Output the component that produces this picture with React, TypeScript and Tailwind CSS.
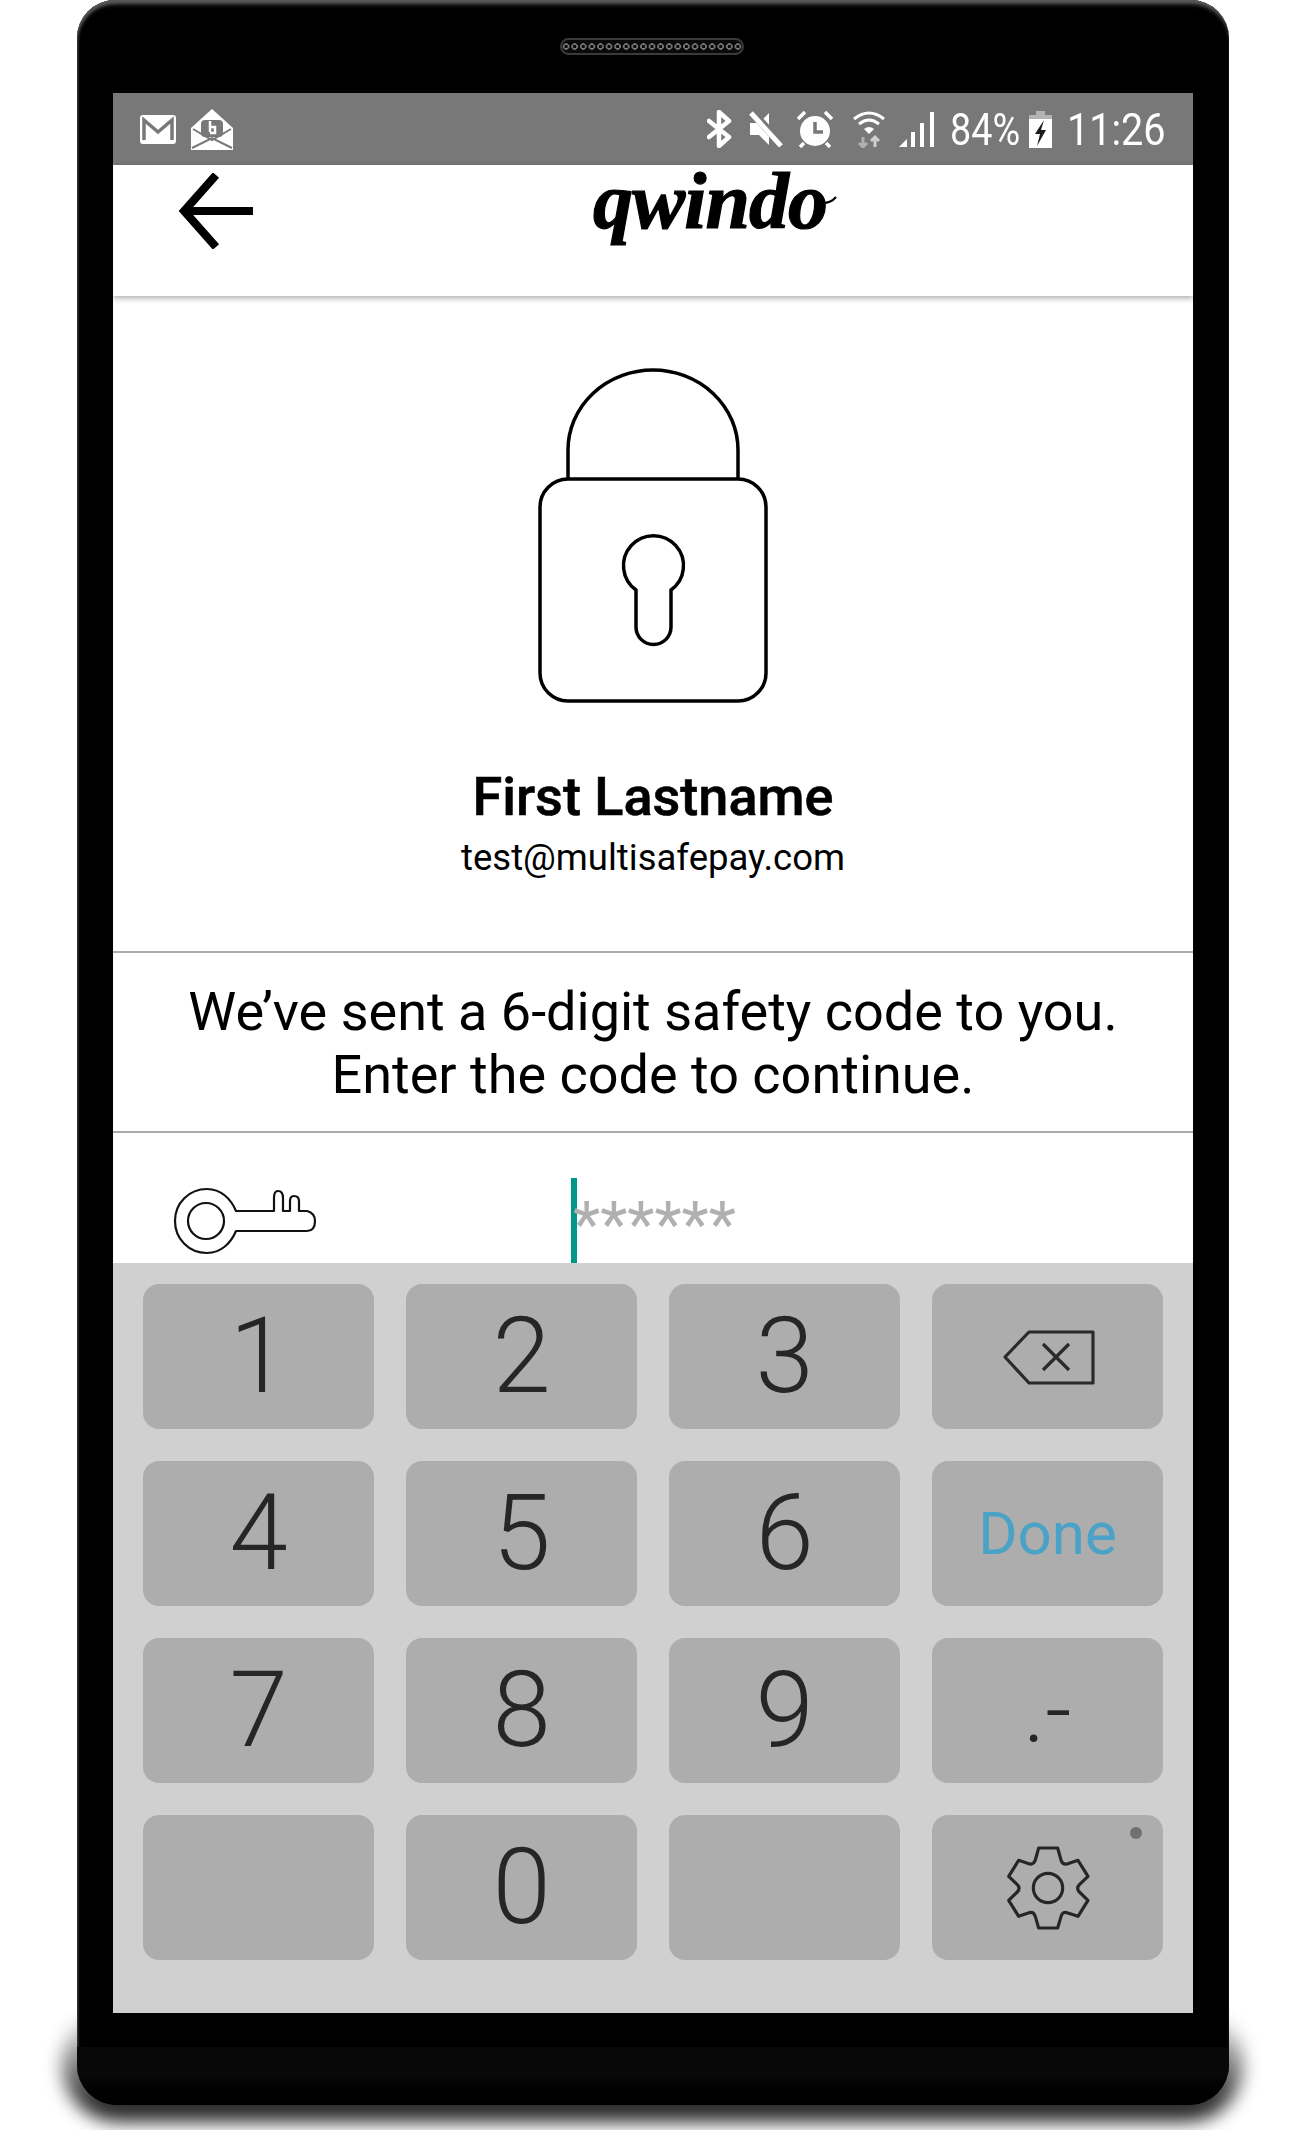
import React from "react";

const roboto = "font-['Roboto',sans-serif]";

function Key({ children, dot }: { children?: React.ReactNode; dot?: boolean }) {
  return (
    <div className="relative flex h-[145px] w-[231px] items-center justify-center rounded-[16px] bg-[#adadad] text-[105px] font-light leading-none text-[#262626]">
      {children}
      {dot && <span className="absolute right-[21px] top-[12px] h-[12px] w-[12px] rounded-full bg-[#707070]" />}
    </div>
  );
}

function Backspace() {
  return (
    <svg width="96" height="60" viewBox="0 0 96 60" fill="none" stroke="#2a2a2a" strokeWidth="3.2" strokeLinejoin="round">
      <path d="M5 30 L29 5 H93 V56 H29 Z" />
      <path d="M43 17 L69 43 M69 17 L43 43" />
    </svg>
  );
}

function Gear() {
  return (
    <svg width="90" height="90" viewBox="308 185 270 270" fill="none" stroke="#262626" strokeWidth="9.5" strokeLinejoin="round" strokeLinecap="round">
      <path d="M415 200 H472 L482 236 Q486 250 500 248 L533 237 L563 285 L537 310 Q527 320 537 332 L563 357 L533 405 L500 394 Q486 390 482 406 L472 440 H415 L405 406 Q400 390 386 394 L355 405 L325 357 L351 332 Q361 320 351 310 L325 285 L355 237 L388 248 Q400 250 405 236 Z" />
      <circle cx="443" cy="320" r="44" />
    </svg>
  );
}

function StatusIcons() {
  return (
    <div className="flex items-center">
      <svg width="25" height="38" viewBox="0 0 25 38" fill="none" stroke="#fff" strokeWidth="4.5" className="mr-[17px]">
        <path d="M2 11 L22 27 L12 36 V2 L22 11 L2 27" strokeLinejoin="round" strokeLinecap="round" />
      </svg>
      <svg width="34" height="36" viewBox="0 0 34 36" fill="#fff" className="mr-[13px]">
        <path d="M1 12 H10 L20 2 V34 L10 24 H1 Z" />
        <path d="M3 1 L33 34" stroke="#787878" strokeWidth="8" />
        <path d="M2 2 L32 35" stroke="#fff" strokeWidth="5" />
      </svg>
      <svg width="38" height="38" viewBox="0 0 38 38" className="mr-[18px]">
        <circle cx="19" cy="21" r="15" fill="#fff" />
        <path d="M19 12 V22 H27" fill="none" stroke="#787878" strokeWidth="3.5" />
        <path d="M2 9 L9 2 M36 9 L29 2 M8 33 L4 37 M30 33 L34 37" stroke="#fff" strokeWidth="3.5" />
      </svg>
      <svg width="34" height="38" viewBox="0 0 34 38" fill="none" className="mr-[13px]">
        <path d="M2 9 Q17 -3 32 9" stroke="#fff" strokeWidth="3" />
        <path d="M7 14 Q17 6 27 14" stroke="#fff" strokeWidth="3" />
        <path d="M12 19 Q17 15 22 19 L17 24 Z" fill="#fff" />
        <path d="M11 27 V37 M7 33 L11 37 L15 33" stroke="#b0b0b0" strokeWidth="3" />
        <path d="M23 37 V27 M19 31 L23 27 L27 31" stroke="#cfcfcf" strokeWidth="3" />
      </svg>
      <svg width="36" height="36" viewBox="0 0 36 36" fill="#fff" className="mr-[15px]">
        <path d="M0 36 L8 28 V36 Z" />
        <rect x="12" y="21" width="4" height="15" />
        <rect x="21" y="12" width="4" height="24" />
        <rect x="31" y="1" width="4" height="35" />
      </svg>
      <span className="mr-[11px] inline-block w-[68px] origin-left scale-x-[0.84] whitespace-nowrap text-[45px] font-normal leading-none text-white">84%</span>
      <svg width="23" height="37" viewBox="0 0 23 37" className="mr-[15px]">
        <path d="M7 0 H16 V4 H23 V8 H0 V4 H7 Z" fill="#b4b4b4" />
        <rect x="0" y="8" width="23" height="29" fill="#fff" />
        <path d="M15 9 L6 23 H11 L8 35 L17 19 H12 Z" fill="#1a1a1a" />
      </svg>
      <span className="inline-block w-[95px] origin-left scale-x-[0.88] whitespace-nowrap text-[45px] font-normal leading-none text-white">11:26</span>
    </div>
  );
}

export default function App() {
  const rows: React.ReactNode[] = [
    <Key key="1">1</Key>,
    <Key key="2">2</Key>,
    <Key key="3">3</Key>,
    <Key key="b"><Backspace /></Key>,
    <Key key="4">4</Key>,
    <Key key="5">5</Key>,
    <Key key="6">6</Key>,
    <Key key="d"><span className="text-[60px] font-normal text-[#4aa3c6]">Done</span></Key>,
    <Key key="7">7</Key>,
    <Key key="8">8</Key>,
    <Key key="9">9</Key>,
    <Key key="p"><span className="text-[92px] font-light">.-</span></Key>,
    <Key key="e1" />,
    <Key key="0">0</Key>,
    <Key key="e2" />,
    <Key key="g" dot><Gear /></Key>,
  ];
  return (
    <div className={`relative h-[2130px] w-[1305px] overflow-hidden bg-white ${roboto}`}>
      <div className="absolute bottom-[8px] left-[62px] right-[62px] h-[115px] rounded-[60px] bg-linear-to-b from-transparent to-black/85 to-85% blur-[9px]" />
      <div className="relative ml-[77px] h-[2105px] w-[1152px] rounded-t-[38px] rounded-b-[40px] bg-black px-[36px] pt-[93px] shadow-[inset_0_6px_4px_-2px_#5a5a5a,inset_2px_3px_3px_-1px_#444]">
        <div className="absolute inset-x-0 bottom-0 h-[58px] rounded-b-[40px] bg-linear-to-b from-[#080808] from-50% to-black" />
        <div className="absolute left-[483px] top-[38px] h-[17px] w-[184px] rounded-full border-2 border-[#3a3a3a] bg-[#0a0a0a] bg-[radial-gradient(circle,#0a0a0a_1.5px,#777_2px,#777_3px,transparent_3.5px)] bg-[length:8.6px_13px] bg-center" />
        <div className="relative flex h-[1920px] w-[1080px] flex-col overflow-hidden bg-white">
          {/* status bar */}
          <div className="flex h-[72px] shrink-0 items-center justify-between bg-[#787878] pl-[27px] pr-[31px]">
            <div className="flex items-center gap-[15px]">
              <svg width="36" height="29" viewBox="0 0 36 29">
                <rect x="0" y="0" width="36" height="29" rx="3" fill="#fff" />
                <path d="M4 25 V5 L18 17 L32 5 V25" fill="none" stroke="#787878" strokeWidth="3.5" />
              </svg>
              <svg width="42" height="41" viewBox="0 0 42 41">
                <path d="M21 0 L42 19 V41 H0 V19 Z" fill="#fff" />
                <path d="M2 20 L21 31 L40 20 M1 39 L21 29 L41 39" fill="none" stroke="#787878" strokeWidth="2" />
                <rect x="10" y="11" width="22" height="17" rx="4" fill="#787878" />
                <path d="M19 12 V23 M19 18 H24 V24 H19" fill="none" stroke="#fff" strokeWidth="2.5" />
              </svg>
            </div>
            <StatusIcons />
          </div>
          {/* header */}
          <div className="relative z-10 flex h-[131px] shrink-0 items-start bg-white shadow-[0_2px_6px_rgba(0,0,0,0.35)]">
            <svg width="76" height="76" viewBox="0 0 74 74" fill="none" stroke="#000" strokeWidth="8" className="ml-[65px] mt-[8px]">
              <path d="M37 2 L6 37 L37 72" />
              <path d="M6 37 H73" />
            </svg>
            <div className="ml-[339px] -mt-[18px] flex items-start">
              <span className="font-['Liberation_Serif',serif] text-[80px] font-bold italic leading-[108px] tracking-[-1px] text-black [-webkit-text-stroke:1.2px_#000]">qwindo</span>
              <svg width="14" height="10" viewBox="0 0 14 10" fill="none" stroke="#000" strokeWidth="2" className="-ml-[4px] mt-[48px]">
                <path d="M0 8 Q8 8 13 2" />
              </svg>
            </div>
          </div>
          {/* profile */}
          <div className="flex h-[657px] shrink-0 flex-col items-center border-b-2 border-[#aaaaaa] pt-[72px]">
            <svg width="232" height="336" viewBox="0 0 232 336" fill="none" stroke="#000" strokeWidth="3.5">
              <path d="M31 111 V82 A85 80 0 0 1 201 82 V111" />
              <rect x="3" y="111" width="226" height="222" rx="28" />
              <path d="M99 222 A30 30 0 1 1 134 222 V259 A17.5 17.5 0 0 1 99 259 Z" strokeLinejoin="round" />
            </svg>
            <div className="mt-[62px] text-[54px] font-medium leading-[62px] text-black [-webkit-text-stroke:0.6px_#000]">First Lastname</div>
            <div className="mt-[6px] text-[36.5px] leading-[48px] text-black">test@multisafepay.com</div>
          </div>
          {/* message */}
          <div className="flex h-[180px] shrink-0 flex-col justify-center border-b-2 border-[#aaaaaa] pt-[2px] text-center text-[54px] leading-[63px] text-black">
            <div>We’ve sent a 6-digit safety code to you.</div>
            <div>Enter the code to continue.</div>
          </div>
          {/* input */}
          <div className="flex h-[130px] shrink-0 items-end">
            <svg width="146" height="68" viewBox="0 0 146 68" fill="#fff" stroke="#111" strokeWidth="2.2" className="mb-[8px] ml-[60px]" strokeLinejoin="round">
              <path d="M63 24 H101 V11 Q101 4 105 4 Q110 4 110 11 V24 H117 V14 Q117 9 121 9 Q126 9 126 14 V24 H134 Q142 26 142 34 Q142 44 134 44 H63 C58 56 48 66 34 66 C16 66 2 52 2 34 C2 16 16 2 34 2 C48 2 58 12 63 24 Z" />
              <circle cx="33" cy="34" r="18" />
            </svg>
            <div className="ml-[252px] h-[85px] w-[6px] shrink-0 bg-[#009688]" />
            <div className="-ml-[4px] mb-[1px] text-[63px] leading-[75px] text-[#b0b0b0]">******</div>
          </div>
          {/* keypad */}
          <div className="grid flex-1 grid-cols-4 content-start gap-x-[32px] gap-y-[32px] bg-[#d0d0d0] pl-[30px] pr-[30px] pt-[21px]">
            {rows}
          </div>
        </div>
      </div>
    </div>
  );
}
